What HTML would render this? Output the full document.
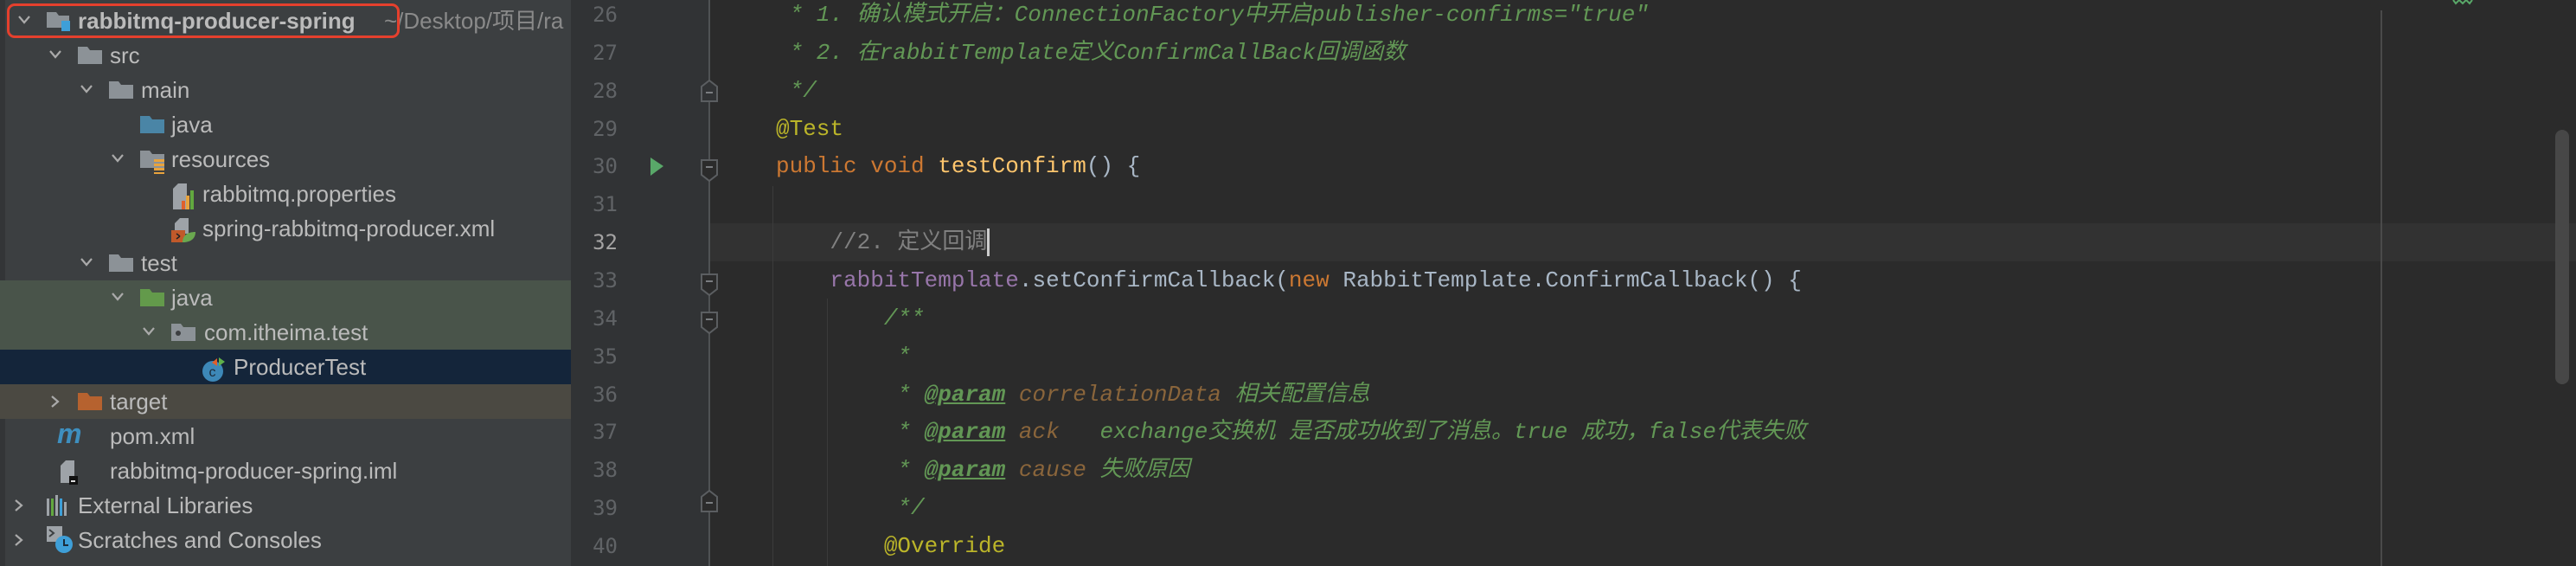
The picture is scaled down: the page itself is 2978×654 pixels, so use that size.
<!DOCTYPE html>
<html><head><meta charset="utf-8"><style>
*{margin:0;padding:0;box-sizing:border-box}
body{width:2978px;height:654px;overflow:hidden;background:#2b2b2b;position:relative;font-family:"Liberation Sans","Noto Sans CJK SC",sans-serif}
#panel{position:absolute;left:0;top:0;width:660px;height:654px;background:#3c3f41;overflow:hidden}
.row{position:absolute;left:0;width:660px;height:40px;line-height:40px;font-size:26px;color:#bbbbbb;white-space:nowrap}
.row span.t{position:absolute;top:0}
.arr{position:absolute;top:13px}
.ic{position:absolute;top:8px}
#gutter{position:absolute;left:660px;top:0;width:160px;height:654px;background:#313335}
.ln{position:absolute;left:660px;width:54px;text-align:right;font-family:"DejaVu Sans Mono","Liberation Mono",monospace;font-size:24px;color:#606366;height:44px;line-height:44px}
.cl{position:absolute;left:897px;height:44px;line-height:44px;font-family:"Liberation Mono","Noto Sans CJK SC",monospace;font-size:26px;color:#a9b7c6;white-space:pre}
.c{color:#629755;font-style:italic}
.g{color:#629755}
.tag{color:#629755;font-weight:bold;font-style:italic;text-decoration:underline}
.pn{color:#8a653b;font-style:italic}
.an{color:#bbb529}
.kw{color:#cc7832}
.fn{color:#ffc66d}
.fi{color:#9876aa}
.lc{color:#808080}
</style></head><body>
<div id="panel">
  <div style="position:absolute;left:0;top:0;width:6px;height:654px;background:#333537"></div>
  <div class="row" style="top:324px;background:#49544a"></div>
  <div class="row" style="top:364px;background:#49544a"></div>
  <div class="row" style="top:404px;background:#14253a"></div>
  <div class="row" style="top:444px;background:#4b4942"></div>

  <div class="row" style="top:4px">
    <svg class="arr" style="left:20px" width="16" height="12"><polyline points="2,2 8,9 14,2" fill="none" stroke="#aaa" stroke-width="2.2"/></svg>
    <svg class="ic" style="left:54px" width="30" height="26"><path d="M0,2h11l3,4h12v14H0z" fill="#8c9297"/><rect x="17" y="12" width="10" height="12" fill="#3e9fd8"/></svg>
    <span class="t" style="left:90px;font-weight:bold">rabbitmq-producer-spring</span>
    <span class="t" style="left:444px;color:#8a8a8a">~/Desktop/项目/ra</span>
  </div>
  <div style="position:absolute;left:8px;top:4px;width:454px;height:40px;border:3px solid #e5402d;border-radius:9px"></div>
  <div class="row" style="top:44px">
    <svg class="arr" style="left:56px" width="16" height="12"><polyline points="2,2 8,9 14,2" fill="none" stroke="#aaa" stroke-width="2.2"/></svg>
    <svg class="ic" style="left:90px" width="30" height="26"><path d="M0,2h11l3,4h14v16H0z" fill="#8c9297"/></svg>
    <span class="t" style="left:127px">src</span>
  </div>
  <div class="row" style="top:84px">
    <svg class="arr" style="left:92px" width="16" height="12"><polyline points="2,2 8,9 14,2" fill="none" stroke="#aaa" stroke-width="2.2"/></svg>
    <svg class="ic" style="left:126px" width="30" height="26"><path d="M0,2h11l3,4h14v16H0z" fill="#8c9297"/></svg>
    <span class="t" style="left:163px">main</span>
  </div>
  <div class="row" style="top:124px">
    <svg class="ic" style="left:162px" width="30" height="26"><path d="M0,2h11l3,4h14v16H0z" fill="#4a85a6"/></svg>
    <span class="t" style="left:198px">java</span>
  </div>
  <div class="row" style="top:164px">
    <svg class="arr" style="left:128px" width="16" height="12"><polyline points="2,2 8,9 14,2" fill="none" stroke="#aaa" stroke-width="2.2"/></svg>
    <svg class="ic" style="left:162px" width="30" height="30"><path d="M0,2h11l3,4h14v16H0z" fill="#8c9297"/><rect x="16" y="12" width="12" height="3" fill="#e8a33d"/><rect x="16" y="17" width="12" height="3" fill="#e8a33d"/><rect x="16" y="22" width="12" height="3" fill="#e8a33d"/><rect x="16" y="27" width="12" height="2" fill="#e8a33d"/></svg>
    <span class="t" style="left:198px">resources</span>
  </div>
  <div class="row" style="top:204px">
    <svg class="ic" style="left:200px" width="28" height="30"><path d="M0,6l6,-6h10v30H0z" fill="#9ea3a8"/><rect x="10" y="20" width="4" height="10" fill="#e0602c"/><rect x="15" y="14" width="4" height="16" fill="#e8a33d"/><rect x="20" y="8" width="4" height="22" fill="#62a83f"/></svg>
    <span class="t" style="left:234px">rabbitmq.properties</span>
  </div>
  <div class="row" style="top:244px">
    <svg class="ic" style="left:198px" width="30" height="30"><path d="M4,6l6,-6h10v18H4z" fill="#9ea3a8"/><rect x="0" y="14" width="16" height="14" fill="#c0592a"/><path d="M10,21l-4,-3M10,21l-4,3" stroke="#222" stroke-width="1.5"/><path d="M13,28c0,-8 6,-12 15,-12c0,8 -6,12 -15,12z" fill="#6aa84f"/></svg>
    <span class="t" style="left:234px">spring-rabbitmq-producer.xml</span>
  </div>
  <div class="row" style="top:284px">
    <svg class="arr" style="left:92px" width="16" height="12"><polyline points="2,2 8,9 14,2" fill="none" stroke="#aaa" stroke-width="2.2"/></svg>
    <svg class="ic" style="left:126px" width="30" height="26"><path d="M0,2h11l3,4h14v16H0z" fill="#8c9297"/></svg>
    <span class="t" style="left:163px">test</span>
  </div>
  <div class="row" style="top:324px">
    <svg class="arr" style="left:128px" width="16" height="12"><polyline points="2,2 8,9 14,2" fill="none" stroke="#aaa" stroke-width="2.2"/></svg>
    <svg class="ic" style="left:162px" width="30" height="26"><path d="M0,2h11l3,4h14v16H0z" fill="#639a4b"/></svg>
    <span class="t" style="left:198px">java</span>
  </div>
  <div class="row" style="top:364px">
    <svg class="arr" style="left:164px" width="16" height="12"><polyline points="2,2 8,9 14,2" fill="none" stroke="#aaa" stroke-width="2.2"/></svg>
    <svg class="ic" style="left:198px" width="30" height="26"><path d="M0,2h11l3,4h14v16H0z" fill="#8c9297"/><circle cx="8" cy="13" r="3" fill="#3c3f41"/></svg>
    <span class="t" style="left:236px">com.itheima.test</span>
  </div>
  <div class="row" style="top:404px">
    <svg class="ic" style="left:233px" width="32" height="30"><circle cx="13" cy="17" r="12" fill="#3d88b8"/><text x="8.5" y="23" font-size="16" font-family="Liberation Sans" fill="#1b2b3a">c</text><path d="M18,2l-6,5l6,4z" fill="#e0602c"/><path d="M20,1l7,5l-7,5z" fill="#5fb04a"/></svg>
    <span class="t" style="left:270px">ProducerTest</span>
  </div>
  <div class="row" style="top:444px">
    <svg class="arr" style="left:58px;top:12px" width="12" height="16"><polyline points="2,2 9,8 2,14" fill="none" stroke="#aaa" stroke-width="2.2"/></svg>
    <svg class="ic" style="left:90px" width="30" height="26"><path d="M0,2h11l3,4h14v16H0z" fill="#b6622f"/></svg>
    <span class="t" style="left:127px">target</span>
  </div>
  <div class="row" style="top:484px">
    <span class="t" style="left:66px;color:#3e8fbf;font-weight:bold;font-style:italic;font-size:32px;top:-3px">m</span>
    <span class="t" style="left:127px">pom.xml</span>
  </div>
  <div class="row" style="top:524px">
    <svg class="ic" style="left:70px" width="22" height="30"><path d="M0,6l6,-6h10v26H0z" fill="#9ea3a8"/><rect x="10" y="18" width="10" height="10" fill="#111"/><rect x="12" y="23" width="5" height="2" fill="#ddd"/></svg>
    <span class="t" style="left:127px">rabbitmq-producer-spring.iml</span>
  </div>
  <div class="row" style="top:564px">
    <svg class="arr" style="left:16px;top:12px" width="12" height="16"><polyline points="2,2 9,8 2,14" fill="none" stroke="#aaa" stroke-width="2.2"/></svg>
    <svg class="ic" style="left:54px" width="30" height="26"><rect x="0" y="4" width="3" height="20" fill="#9ea3a8"/><rect x="5" y="4" width="3" height="20" fill="#62a83f"/><rect x="10" y="0" width="3" height="24" fill="#9ea3a8"/><rect x="15" y="4" width="3" height="20" fill="#3e9fd8"/><rect x="20" y="8" width="3" height="16" fill="#9ea3a8"/></svg>
    <span class="t" style="left:90px">External Libraries</span>
  </div>
  <div class="row" style="top:604px">
    <svg class="arr" style="left:16px;top:12px" width="12" height="16"><polyline points="2,2 9,8 2,14" fill="none" stroke="#aaa" stroke-width="2.2"/></svg>
    <svg class="ic" style="left:54px;top:4px" width="32" height="34"><rect x="0" y="0" width="18" height="18" fill="#9ea3a8"/><path d="M3,4l5,4l-5,4" stroke="#3c3f41" stroke-width="2" fill="none"/><circle cx="20" cy="21" r="10" fill="#3e9fd8"/><path d="M20,15v7h5" stroke="#1b2b3a" stroke-width="2" fill="none"/></svg>
    <span class="t" style="left:90px">Scratches and Consoles</span>
  </div>
</div>

<div id="gutter"></div>
<div style="position:absolute;left:820px;top:258px;width:2158px;height:44px;background:#323232"></div>
<div style="position:absolute;left:819px;top:0;width:2px;height:654px;background:#4f5254"></div>
<div style="position:absolute;left:2752px;top:12px;width:2px;height:642px;background:#4a4a4a"></div>
<div style="position:absolute;left:893px;top:215px;width:1px;height:439px;background:#3b3b3b"></div>
<div style="position:absolute;left:956px;top:345px;width:1px;height:309px;background:#3b3b3b"></div>
<div style="position:absolute;left:2954px;top:150px;width:16px;height:294px;border-radius:8px;background:#474747"></div>
<svg style="position:absolute;left:2835px;top:0" width="24" height="6"><polyline points="1,0 4,4 8,0 12,4 16,0 20,4 23,0" fill="none" stroke="#59a869" stroke-width="2"/></svg>

<div class="ln" style="top:-5px">26</div>
<div class="ln" style="top:39px">27</div>
<div class="ln" style="top:83px">28</div>
<div class="ln" style="top:127px">29</div>
<div class="ln" style="top:170px">30</div>
<div class="ln" style="top:214px">31</div>
<div class="ln" style="top:258px;color:#a4a3a3">32</div>
<div class="ln" style="top:302px">33</div>
<div class="ln" style="top:346px">34</div>
<div class="ln" style="top:390px">35</div>
<div class="ln" style="top:434px">36</div>
<div class="ln" style="top:477px">37</div>
<div class="ln" style="top:521px">38</div>
<div class="ln" style="top:565px">39</div>
<div class="ln" style="top:609px">40</div>

<svg style="position:absolute;left:751px;top:181px" width="18" height="24"><path d="M1,1L16,11L1,22z" fill="#59a869"/></svg>
<svg style="position:absolute;left:810px;top:92px" width="20" height="26"><path d="M1,25V8L10,1L19,8V25z" fill="#313335" stroke="#5b5e61" stroke-width="2"/><path d="M6,15h8" stroke="#7a7d80" stroke-width="2"/></svg>
<svg style="position:absolute;left:810px;top:184px" width="20" height="26"><path d="M1,1H19V18L10,25L1,18z" fill="#2b2b2b" stroke="#5b5e61" stroke-width="2"/><path d="M6,9h8" stroke="#7a7d80" stroke-width="2"/></svg>
<svg style="position:absolute;left:810px;top:316px" width="20" height="26"><path d="M1,1H19V18L10,25L1,18z" fill="#2b2b2b" stroke="#5b5e61" stroke-width="2"/><path d="M6,9h8" stroke="#7a7d80" stroke-width="2"/></svg>
<svg style="position:absolute;left:810px;top:360px" width="20" height="26"><path d="M1,1H19V18L10,25L1,18z" fill="#2b2b2b" stroke="#5b5e61" stroke-width="2"/><path d="M6,9h8" stroke="#7a7d80" stroke-width="2"/></svg>
<svg style="position:absolute;left:810px;top:566px" width="20" height="26"><path d="M1,25V8L10,1L19,8V25z" fill="#2b2b2b" stroke="#5b5e61" stroke-width="2"/><path d="M6,15h8" stroke="#7a7d80" stroke-width="2"/></svg>

<div class="cl c" style="top:-5px"> * 1. 确认模式开启：ConnectionFactory中开启publisher-confirms="true"</div>
<div class="cl c" style="top:39px"> * 2. 在rabbitTemplate定义ConfirmCallBack回调函数</div>
<div class="cl c" style="top:83px"> */</div>
<div class="cl an" style="top:127px">@Test</div>
<div class="cl" style="top:170px"><span class="kw">public void </span><span class="fn">testConfirm</span>() {</div>
<div class="cl" style="top:258px"><span class="lc">    //2. 定义回调</span><span style="display:inline-block;width:3px;height:32px;background:#ccc;vertical-align:middle"></span></div>
<div class="cl" style="top:302px">    <span class="fi">rabbitTemplate</span>.setConfirmCallback(<span class="kw">new </span>RabbitTemplate.ConfirmCallback() {</div>
<div class="cl c" style="top:346px">        /**</div>
<div class="cl c" style="top:390px">         *</div>
<div class="cl c" style="top:434px">         * <span class="tag">@param</span> <span class="pn">correlationData</span> 相关配置信息</div>
<div class="cl c" style="top:477px">         * <span class="tag">@param</span> <span class="pn">ack</span>   exchange交换机 是否成功收到了消息。true 成功，false代表失败</div>
<div class="cl c" style="top:521px">         * <span class="tag">@param</span> <span class="pn">cause</span> 失败原因</div>
<div class="cl c" style="top:565px">         */</div>
<div class="cl an" style="top:609px">        @Override</div>
</body></html>
